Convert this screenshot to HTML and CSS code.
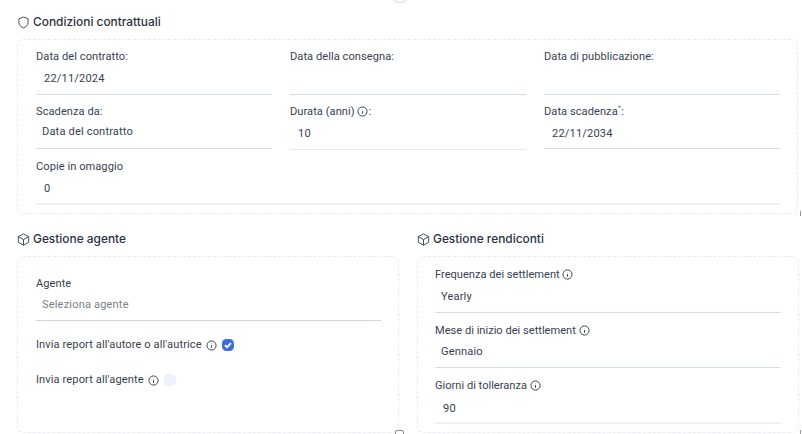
FILE: index.html
```html
<!DOCTYPE html>
<html lang="it">
<head>
<meta charset="utf-8">
<title>Condizioni contrattuali</title>
<link rel="stylesheet" href="styles.css">
</head>
<body>
<span class="mark mark-top"></span>
<main class="page">
  <section class="section">
    <h2 class="title">
      <svg class="title-icon" viewBox="0 0 24 24"><path d="M12 2l8.500 3v7c0 4.800-3.500 8-8.500 10-5-2-8.500-5.200-8.500-10V5z"/></svg>
      Condizioni contrattuali
    </h2>
    <div class="card grid-3">
      <div class="field"><label class="label">Data del contratto:</label><div class="value inset">22/11/2024</div></div>
      <div class="field"><label class="label">Data della consegna:</label><div class="value inset"></div></div>
      <div class="field"><label class="label">Data di pubblicazione:</label><div class="value inset"></div></div>
      <div class="field short"><label class="label">Scadenza da:</label><div class="value select up">Data del contratto</div></div>
      <div class="field soft"><label class="label">Durata (anni) <svg class="info" viewBox="0 0 24 24"><circle cx="12" cy="12" r="10"/><path d="M12 11v6M12 7v.5"/></svg>:</label><div class="value inset">10</div></div>
      <div class="field short"><label class="label">Data scadenza<sup class="req">*</sup>:</label><div class="value inset">22/11/2034</div></div>
      <div class="field full faint"><label class="label">Copie in omaggio</label><div class="value inset">0</div></div>
    </div>
  </section>
  <div class="split">
    <section class="section">
      <h2 class="title">
        <svg class="title-icon" viewBox="0 0 24 24"><path d="M12 1.500l9.500 5.300v10.400L12 22.500l-9.500-5.300V6.800z"/><path d="M2.800 7L12 12.200 21.200 7M12 12.200v10.300"/></svg>
        Gestione agente
      </h2>
      <div class="card card-agent">
        <div class="field"><label class="label">Agente</label><div class="value select">Seleziona agente</div></div>
        <div class="check-row"><span class="label">Invia report all'autore o all'autrice</span><svg class="info" viewBox="0 0 24 24"><circle cx="12" cy="12" r="10"/><path d="M12 11v6M12 7v.5"/></svg><span class="check on"><svg viewBox="0 0 14 14"><path d="M3.500 7.300l2.400 2.300 4.600-4.800"/></svg></span></div>
        <div class="check-row"><span class="label">Invia report all'agente</span><svg class="info" viewBox="0 0 24 24"><circle cx="12" cy="12" r="10"/><path d="M12 11v6M12 7v.5"/></svg><span class="check"></span></div>
      </div>
    </section>
    <section class="section">
      <h2 class="title">
        <svg class="title-icon" viewBox="0 0 24 24"><path d="M12 1.500l9.500 5.300v10.400L12 22.500l-9.500-5.300V6.800z"/><path d="M2.800 7L12 12.200 21.200 7M12 12.200v10.300"/></svg>
        Gestione rendiconti
      </h2>
      <div class="card card-report">
        <div class="field"><label class="label">Frequenza dei settlement <svg class="info" viewBox="0 0 24 24"><circle cx="12" cy="12" r="10"/><path d="M12 11v6M12 7v.5"/></svg></label><div class="value select">Yearly</div></div>
        <div class="field month"><label class="label">Mese di inizio dei settlement <svg class="info" viewBox="0 0 24 24"><circle cx="12" cy="12" r="10"/><path d="M12 11v6M12 7v.5"/></svg></label><div class="value select">Gennaio</div></div>
        <div class="field faint"><label class="label">Giorni di tolleranza <svg class="info" viewBox="0 0 24 24"><circle cx="12" cy="12" r="10"/><path d="M12 11v6M12 7v.5"/></svg></label><div class="value inset">90</div></div>
      </div>
    </section>
  </div>
</main>
<span class="mark mark-handle"></span>
<span class="mark mark-edge-a"></span>
<span class="mark mark-edge-b"></span>
</body>
</html>
```
FILE: styles.css
```css
* { box-sizing: border-box; }
html, body { margin: 0; height: 100%; overflow: hidden; background: #fff; }
body { font-family: Roboto, "Liberation Sans", sans-serif; color: #2d3548; position: relative; }
.page { padding: 14px 4px 0 17px; display: flex; flex-direction: column; gap: 17px; }
.title {
  margin: 0 0 9px;
  height: 16px;
  display: flex;
  align-items: center;
  gap: 3px;
  font: 500 11.900px/16px Inter, "Noto Sans", sans-serif;
  color: #2a3142;
}
.title-icon { width: 13px; height: 13px; fill: none; stroke: #2d3548; stroke-width: 1.600; stroke-linejoin: round; flex: none; }
.card {
  border: 1px dashed #e6ebf3;
  border-radius: 6px;
  background: #fff;
}
.grid-3 {
  display: grid;
  grid-template-columns: repeat(3, 236px);
  column-gap: 18px;
  row-gap: 8px;
  padding: 8px 18px;
  height: 175px;
}
.field { display: flex; flex-direction: column; height: 47px; border-bottom: 1px solid #d5deee; }
.field.short { height: 46px; margin-bottom: 1px; }
.field.soft { border-bottom-color: #e3e8f1; }
.field.faint { border-bottom: 2px solid #eef1f7; }
.field.full { grid-column: 1 / -1; }
.label {
  display: block;
  height: 16px;
  font-size: 11.100px;
  line-height: 18px;
  letter-spacing: 0.050px;
  color: #373f52;
  white-space: nowrap;
}
.value {
  height: 29px;
  font-size: 11.100px;
  line-height: 30px;
  letter-spacing: 0.150px;
  color: #373f52;
}
.inset { padding-left: 8px; }
.select { padding-left: 6px; line-height: 28px; }
.select.up { line-height: 26px; }
.req { font-size: 8px; line-height: 0; color: #7c8494; }
.info { width: 11px; height: 11px; fill: none; stroke: #2d3548; stroke-width: 2; vertical-align: -1.500px; flex: none; }
.split { display: grid; grid-template-columns: 382px 382px; column-gap: 18px; }
.card-agent { height: 177px; padding: 18px 18px 0 18px; }
.card-agent .field { width: 345px; border-bottom-color: #cfd6e2; height: 46px; }
.card-agent .value { color: #7b7f88; line-height: 28px; }
.check-row { display: flex; align-items: center; gap: 4px; height: 16px; margin-top: 16px; }
.check-row .label { letter-spacing: 0.100px; line-height: 16px; }
.check-row + .check-row { margin-top: 19px; }
.check {
  width: 12px;
  height: 12px;
  margin-left: 1px;
  border-radius: 4.500px;
  background: #eef1f9;
  display: block;
}
.check.on { background: #3b6fe0; }
.check svg { display: block; width: 12px; height: 12px; fill: none; stroke: #fff; stroke-width: 2.200; }
.card-report {
  height: 177px;
  padding: 9px 17px 0;
  display: flex;
  flex-direction: column;
  gap: 9px;
}
.card-report .field.month { height: 46px; }
.card-report .label { letter-spacing: 0; }
.card-report .select { line-height: 30px; }
.card-report .month .select { line-height: 28px; }
.card-report .inset { line-height: 32px; }
.mark { position: absolute; display: block; background: #fff; }
.mark-top { left: 393px; top: -6px; width: 14px; height: 9px; border: 1px solid #d8d8d8; border-radius: 50%; }
.mark-handle { left: 395px; top: 430px; width: 9px; height: 8px; border: 1px solid #8a8a8a; border-radius: 2px; }
.mark-edge-a { left: 800px; top: 211px; width: 1px; height: 5px; background: #9a9a9a; }
.mark-edge-b { left: 800px; top: 430px; width: 1px; height: 4px; background: #9a9a9a; }
```
